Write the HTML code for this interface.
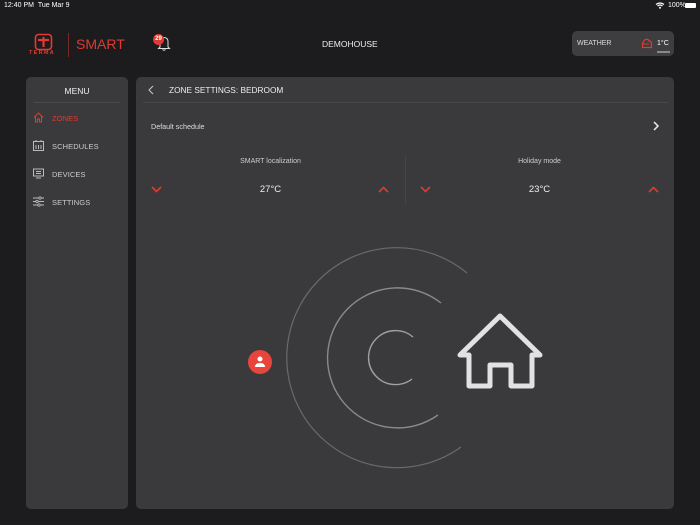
<!DOCTYPE html>
<html><head><meta charset="utf-8"><style>
*{margin:0;padding:0;box-sizing:border-box}
body{width:700px;height:525px;background:#1c1c1e;font-family:"Liberation Sans",sans-serif;color:#ddd;position:relative;overflow:hidden}
.a{position:absolute}
.t{font-size:7px;color:#fff}
.panel{background:#3a3a3c;border-radius:5px}
.mi{position:absolute;left:26px;font-size:7.5px;color:#ccc;letter-spacing:.1px}
</style></head><body>
<div class="a t" style="left:4px;top:2px;font-size:7px">12:40 PM&nbsp;&nbsp;Tue Mar 9</div>
<div class="a t" style="left:668px;top:2px;font-size:7px">100%</div>
<div class="a" style="left:685px;top:3px;width:11px;height:5px;background:#fff;border-radius:1px"></div>
<svg class="a" style="left:655px;top:2px" width="10" height="7" viewBox="0 0 10 7"><path d="M1 2.5Q5 -0.5 9 2.5M2.5 4Q5 2 7.5 4" stroke="#fff" stroke-width="1.2" fill="none"/><circle cx="5" cy="5.8" r="1" fill="#fff"/></svg>
<!-- logo -->
<svg class="a" style="left:34px;top:33px" width="20" height="20" viewBox="0 0 20 20"><rect x="1.5" y="1.5" width="16" height="15" rx="3" stroke="#e03a32" stroke-width="1.6" fill="none"/><path d="M4 7H15M9.5 7V14" stroke="#e03a32" stroke-width="2.2"/><circle cx="9.5" cy="5" r="1.2" fill="#e03a32"/></svg>
<div class="a" style="left:29px;top:50px;font-size:5.5px;color:#e03a32;letter-spacing:1.3px;font-weight:bold">TERMA</div>
<div class="a" style="left:68px;top:33px;width:1px;height:24px;background:#7a2a26"></div>
<div class="a" style="left:76px;top:36px;font-size:14px;color:#e03a32">SMART</div>
<svg class="a" style="left:155px;top:34px" width="18" height="18" viewBox="0 0 18 18"><path d="M5 13V8Q5 3.5 9 3.5Q13 3.5 13 8V13L14.5 14.5H3.5Z" stroke="#ddd" stroke-width="1" fill="none"/><path d="M7.5 15.5Q9 17 10.5 15.5" stroke="#ddd" fill="none"/></svg>
<div class="a" style="left:153px;top:34px;width:11px;height:11px;border-radius:50%;background:#e03a32;color:#fff;font-size:6px;text-align:center;line-height:11px;font-weight:bold">29</div>
<div class="a" style="left:322px;top:39px;font-size:8.5px;color:#eee">DEMOHOUSE</div>
<div class="a panel" style="left:572px;top:31px;width:102px;height:25px;background:#3e3e40"></div>
<div class="a" style="left:577px;top:40px;font-size:7px;color:#ddd">WEATHER</div>
<svg class="a" style="left:641px;top:37px" width="12" height="12" viewBox="0 0 12 12"><path d="M1.5 10.5H10.5V7Q10.5 4 8 4Q7 1.5 4.5 2.5Q2 4 1.5 7Z" stroke="#e03a32" stroke-width="1.2" fill="none"/><path d="M2 7H8" stroke="#e03a32"/></svg>
<div class="a" style="left:657px;top:40px;font-size:7px;color:#fff">1°C</div>
<div class="a" style="left:657px;top:51px;width:13px;height:2px;background:#888"></div>
<!-- sidebar -->
<div class="a panel" style="left:26px;top:77px;width:102px;height:432px">
<div class="a" style="left:0;width:102px;top:9px;text-align:center;font-size:8.5px;color:#eee">MENU</div>
<div class="a" style="left:8px;top:25px;width:86px;height:1px;background:#4a4a4c"></div>
<svg class="a" style="left:7px;top:35px" width="11" height="11" viewBox="0 0 11 11"><path d="M1 5.5L5.5 1L10 5.5M2.5 4V10H4.5V7H6.5V10H8.5V4" stroke="#e03a32" fill="none"/></svg>
<div class="mi" style="top:37px;color:#e03a32">ZONES</div>
<svg class="a" style="left:7px;top:63px" width="11" height="11" viewBox="0 0 11 11"><rect x="0.5" y="1.5" width="10" height="9" stroke="#bbb" fill="none"/><path d="M3 0V2M8 0V2M3 5V9M5.5 5V9M8 5V9" stroke="#bbb"/></svg>
<div class="mi" style="top:65px">SCHEDULES</div>
<svg class="a" style="left:7px;top:91px" width="11" height="11" viewBox="0 0 11 11"><rect x="0.5" y="1" width="10" height="7" stroke="#bbb" fill="none"/><path d="M3 10H8M3 3.5H8M3 5.5H8" stroke="#bbb"/></svg>
<div class="mi" style="top:93px">DEVICES</div>
<svg class="a" style="left:7px;top:119px" width="11" height="11" viewBox="0 0 11 11"><path d="M0 2H11M0 5.5H11M0 9H11" stroke="#bbb"/><circle cx="7" cy="2" r="1.2" fill="#3a3a3c" stroke="#bbb" stroke-width=".8"/><circle cx="4" cy="5.5" r="1.2" fill="#3a3a3c" stroke="#bbb" stroke-width=".8"/><circle cx="6" cy="9" r="1.2" fill="#3a3a3c" stroke="#bbb" stroke-width=".8"/></svg>
<div class="mi" style="top:121px">SETTINGS</div>
</div>
<!-- main -->
<div class="a panel" style="left:136px;top:77px;width:538px;height:432px"></div>
<svg class="a" style="left:147px;top:85px" width="8" height="10" viewBox="0 0 8 10"><path d="M6 1L2 5L6 9" stroke="#ccc" fill="none"/></svg>
<div class="a" style="left:169px;top:85px;font-size:8.3px;color:#eee">ZONE SETTINGS: BEDROOM</div>
<div class="a" style="left:143px;top:102px;width:525px;height:1px;background:#48484a"></div>
<div class="a" style="left:151px;top:122px;font-size:7.2px;color:#ddd">Default schedule</div>
<svg class="a" style="left:652px;top:121px" width="8" height="10" viewBox="0 0 8 10"><path d="M2 1L6 5L2 9" stroke="#eee" stroke-width="1.5" fill="none"/></svg>
<div class="a" style="left:405px;top:155px;width:1px;height:50px;background:#454547"></div>
<div class="a" style="left:136px;width:269px;top:158px;text-align:center;font-size:7px;color:#ccc">SMART localization</div>
<div class="a" style="left:405px;width:269px;top:158px;text-align:center;font-size:7px;color:#ccc">Holiday mode</div>
<div class="a" style="left:136px;width:269px;top:184px;text-align:center;font-size:9.5px;color:#eee">27°C</div>
<div class="a" style="left:405px;width:269px;top:184px;text-align:center;font-size:9.5px;color:#eee">23°C</div>
<svg class="a" style="left:151px;top:186px" width="11" height="7"><path d="M1 1L5.5 5.5L10 1" stroke="#e03a32" stroke-width="1.6" fill="none"/></svg>
<svg class="a" style="left:378px;top:186px" width="11" height="7"><path d="M1 6L5.5 1.5L10 6" stroke="#e03a32" stroke-width="1.6" fill="none"/></svg>
<svg class="a" style="left:420px;top:186px" width="11" height="7"><path d="M1 1L5.5 5.5L10 1" stroke="#e03a32" stroke-width="1.6" fill="none"/></svg>
<svg class="a" style="left:648px;top:186px" width="11" height="7"><path d="M1 6L5.5 1.5L10 6" stroke="#e03a32" stroke-width="1.6" fill="none"/></svg>
<!-- graphic -->
<svg class="a" style="left:0;top:0" width="700" height="525" viewBox="0 0 700 525">
<path d="M467 273A110 110 0 1 0 461 447" stroke="#6a6a6c" stroke-width="1.2" fill="none"/>
<path d="M441 303A70 70 0 1 0 438 415" stroke="#8a8a8c" stroke-width="1.4" fill="none"/>
<path d="M413 337A27 27 0 1 0 412 379" stroke="#a0a0a2" stroke-width="1.4" fill="none"/>
<path d="M460 355L500 316L540 355H532V386H511V365H490V386H469V355Z" stroke="#e2e2e2" stroke-width="5" stroke-linejoin="round" fill="none"/>
<circle cx="260" cy="362" r="12" fill="#e8453c"/>
<circle cx="260" cy="359" r="2.5" fill="#fff"/>
<path d="M255 367Q255 363 260 363Q265 363 265 367Z" fill="#fff"/>
</svg>
</body></html>
